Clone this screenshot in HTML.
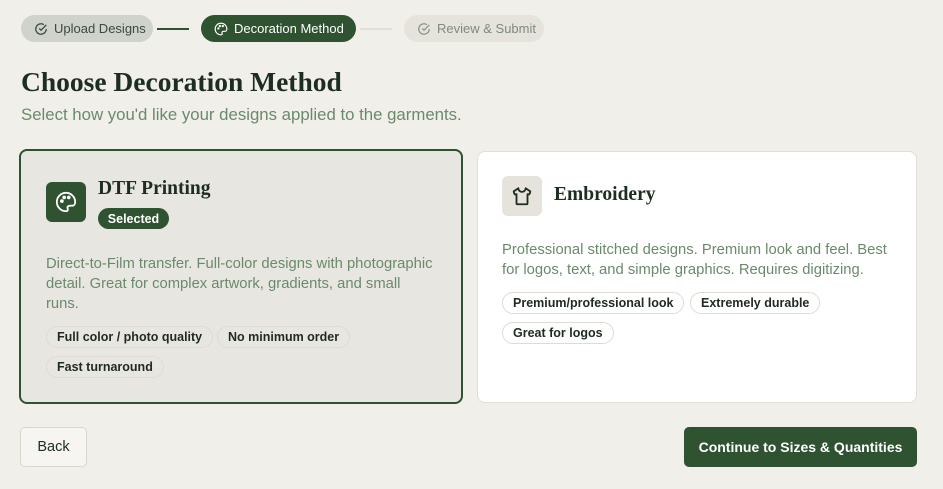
<!DOCTYPE html>
<html><head><style>
*{box-sizing:border-box;margin:0;padding:0}
body{width:943px;height:489px;background:#f1efea;font-family:"Liberation Sans",sans-serif;position:relative;overflow:hidden;color:#1f3322}
.a{position:absolute}
.pill{position:absolute;top:15px;height:27px;border-radius:14px;font-size:13px;display:flex;align-items:center;gap:6px;padding-left:13px}
.serif{font-family:"Liberation Serif",serif;font-weight:bold;color:#1d2e20}
.tag{position:absolute;height:22px;border:1px solid #dedbd3;border-radius:11px;font-size:12.5px;display:flex;align-items:center;padding:0 10px;color:#1f2a20;font-weight:bold}
.desc{position:absolute;font-size:14.8px;line-height:20px;color:#6a8a6c;white-space:nowrap}
</style></head><body>
<div class="pill" style="left:21px;width:132px;background:#cfd3cb;color:#3a4a3c">
<svg width="14" height="14" viewBox="0 0 24 24" fill="none" stroke="#3a4a3c" stroke-width="2.2"><path d="M21 12a9 9 0 1 1-4-7.5"/><path d="M9 11l3 3 9-9"/></svg>Upload Designs</div>
<div class="a" style="left:157px;top:28px;width:32px;height:2px;background:#2f5230"></div>
<div class="pill" style="left:201px;width:155px;background:#2f5230;color:#fff">
<svg width="14" height="14" viewBox="0 0 24 24" fill="none" stroke="#fff" stroke-width="2"><path d="M12 2a10 10 0 0 0 0 20c1.5 0 2-1 2-2s-1-2 0-3 2-1 3-1h2c2 0 3-2 3-4A10 10 0 0 0 12 2z"/><circle cx="7.5" cy="11" r="1"/><circle cx="10" cy="7" r="1"/><circle cx="15" cy="7" r="1"/></svg>Decoration Method</div>
<div class="a" style="left:360px;top:28px;width:32px;height:2px;background:#e3e0d9"></div>
<div class="pill" style="left:404px;width:140px;background:#e6e3dd;color:#7f8a80">
<svg width="14" height="14" viewBox="0 0 24 24" fill="none" stroke="#8a958b" stroke-width="2.2"><path d="M21 12a9 9 0 1 1-4-7.5"/><path d="M9 11l3 3 9-9"/></svg>Review &amp; Submit</div>
<div class="a serif" style="left:21px;top:66px;font-size:27.5px">Choose Decoration Method</div>
<div class="a" style="left:21px;top:105px;font-size:16.8px;color:#6a8a6c">Select how you'd like your designs applied to the garments.</div>

<div class="a" style="left:19px;top:149px;width:444px;height:255px;border:2px solid #2f5230;border-radius:8px;background:#e8e6e0"></div>
<div class="a" style="left:46px;top:182px;width:40px;height:40px;border-radius:6px;background:#2f5230;display:flex;align-items:center;justify-content:center">
<svg width="22" height="22" viewBox="0 0 24 24" fill="none" stroke="#fff" stroke-width="2"><path d="M12 2a10 10 0 0 0 0 20c1.5 0 2-1 2-2s-1-2 0-3 2-1 3-1h2c2 0 3-2 3-4A10 10 0 0 0 12 2z"/><circle cx="7.5" cy="11" r="1"/><circle cx="10" cy="7" r="1"/><circle cx="15" cy="7" r="1"/></svg></div>
<div class="a serif" style="left:98px;top:178px;font-size:19.5px">DTF Printing</div>
<div class="a" style="left:98px;top:208px;width:71px;height:21px;border-radius:11px;background:#2f5230;color:#fff;font-size:12.5px;font-weight:bold;display:flex;align-items:center;justify-content:center">Selected</div>
<div class="desc" style="left:46px;top:254px">Direct-to-Film transfer. Full-color designs with photographic<br>detail. Great for complex artwork, gradients, and small<br>runs.</div>
<div class="tag" style="left:46px;top:326px">Full color / photo quality</div>
<div class="tag" style="left:217px;top:326px">No minimum order</div>
<div class="tag" style="left:46px;top:356px">Fast turnaround</div>

<div class="a" style="left:477px;top:151px;width:440px;height:252px;border:1px solid #e1ded7;border-radius:8px;background:#fff"></div>
<div class="a" style="left:502px;top:176px;width:40px;height:40px;border-radius:6px;background:#e6e3dd;display:flex;align-items:center;justify-content:center">
<svg width="22" height="22" viewBox="0 0 24 24" fill="none" stroke="#1d2e20" stroke-width="2" stroke-linejoin="round"><path d="M20.4 6.5L16 3.5a4 4 0 0 1-8 0L3.6 6.5a1 1 0 0 0-.5 1.3l.6 1.8a1 1 0 0 0 1.2.7L6 10v10a1 1 0 0 0 1 1h10a1 1 0 0 0 1-1V10l1.1.3a1 1 0 0 0 1.2-.7l.6-1.8a1 1 0 0 0-.5-1.3z"/></svg></div>
<div class="a serif" style="left:554px;top:184px;font-size:19.5px">Embroidery</div>
<div class="desc" style="left:502px;top:240px">Professional stitched designs. Premium look and feel. Best<br>for logos, text, and simple graphics. Requires digitizing.</div>
<div class="tag" style="left:502px;top:292px">Premium/professional look</div>
<div class="tag" style="left:690px;top:292px">Extremely durable</div>
<div class="tag" style="left:502px;top:322px">Great for logos</div>

<div class="a" style="left:20px;top:427px;width:67px;height:40px;border:1px solid #dad7cf;border-radius:5px;background:#f6f5f1;font-size:14.5px;display:flex;align-items:center;justify-content:center;color:#1d2e20">Back</div>
<div class="a" style="left:684px;top:427px;width:233px;height:40px;border-radius:5px;background:#2f5230;color:#fff;font-size:14px;font-weight:bold;display:flex;align-items:center;justify-content:center">Continue to Sizes &amp; Quantities</div>
</body></html>
